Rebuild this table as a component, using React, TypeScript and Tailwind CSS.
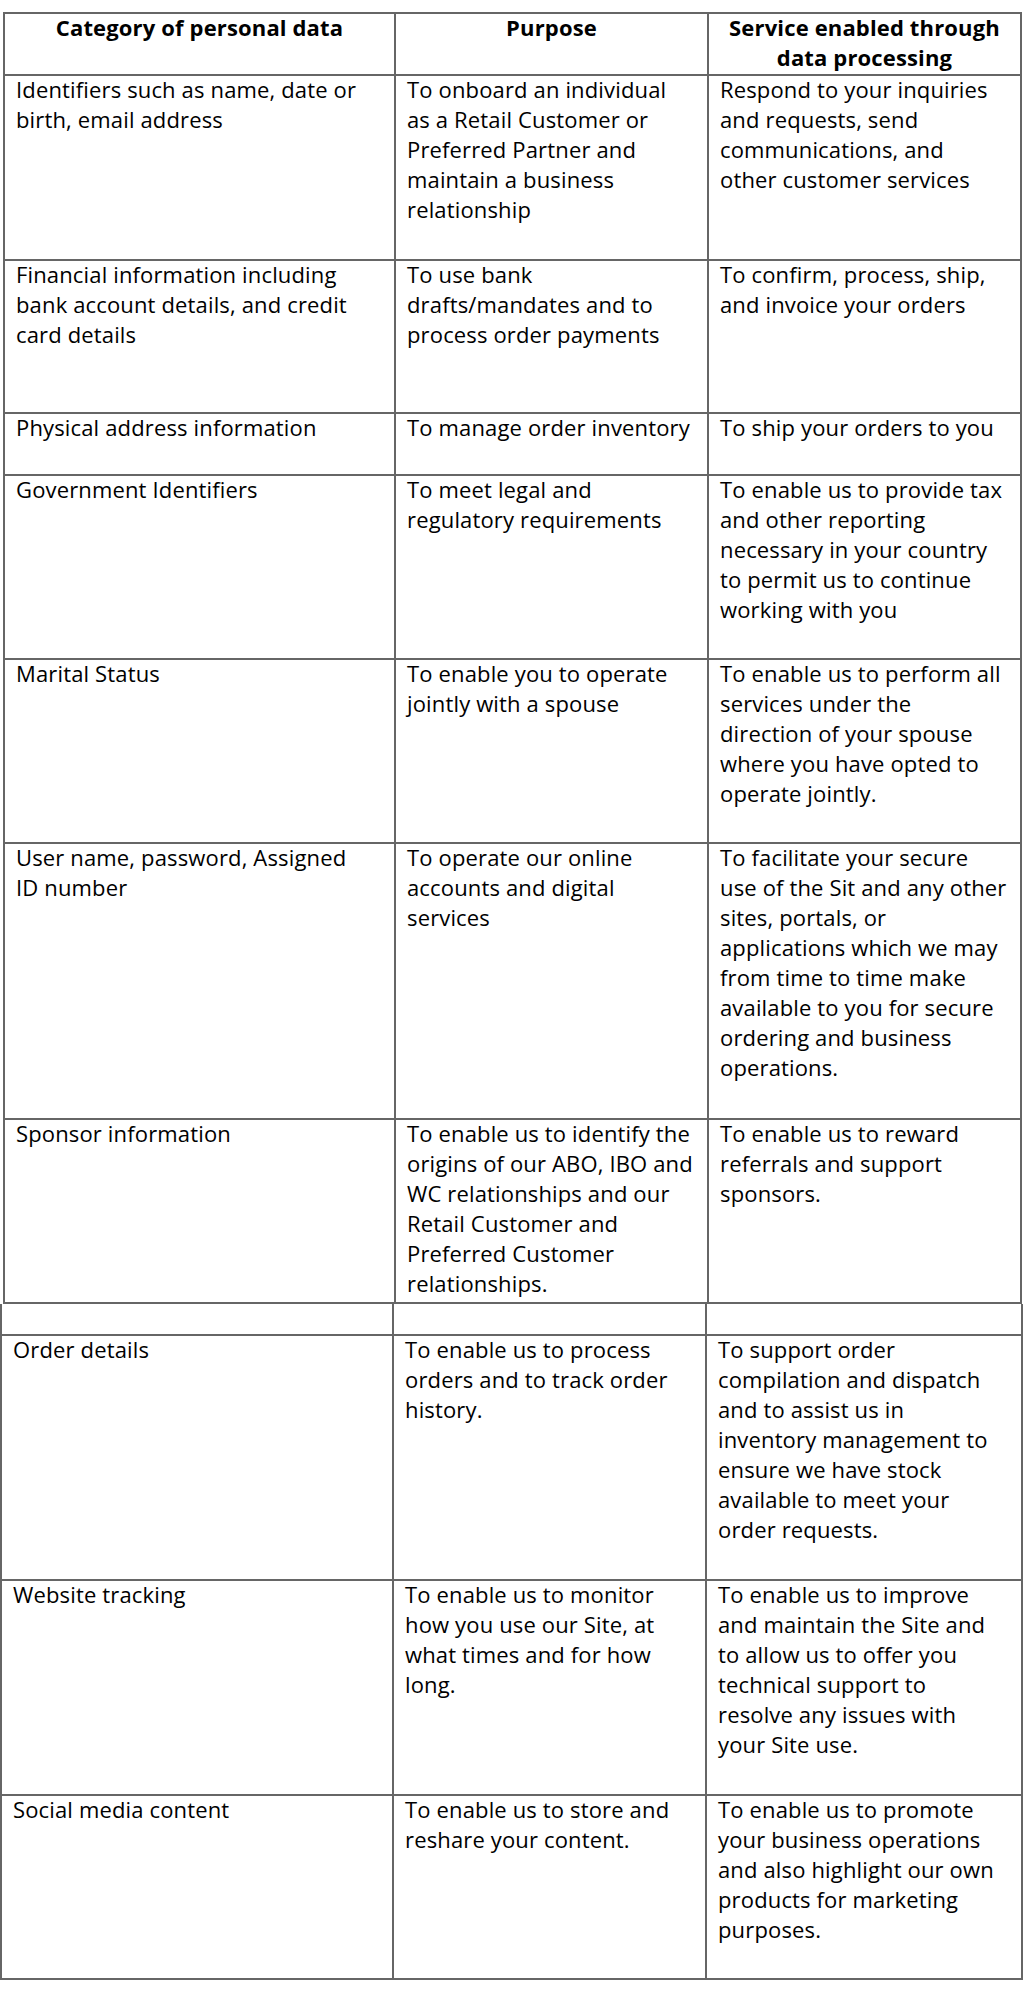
type Row = { h: string; cells: string[][] }

const firstRows: Row[] = [
  {
    h: 'h-[185px]',
    cells: [
      ['Identifiers such as name, date or', 'birth, email address'],
      ['To onboard an individual', 'as a Retail Customer or', 'Preferred Partner and', 'maintain a business', 'relationship'],
      ['Respond to your inquiries', 'and requests, send', 'communications, and', 'other customer services'],
    ],
  },
  {
    h: 'h-[153px]',
    cells: [
      ['Financial information including', 'bank account details, and credit', 'card details'],
      ['To use bank', 'drafts/mandates and to', 'process order payments'],
      ['To confirm, process, ship,', 'and invoice your orders'],
    ],
  },
  {
    h: 'h-[62px]',
    cells: [['Physical address information'], ['To manage order inventory'], ['To ship your orders to you']],
  },
  {
    h: 'h-[184px]',
    cells: [
      ['Government Identifiers'],
      ['To meet legal and', 'regulatory requirements'],
      ['To enable us to provide tax', 'and other reporting', 'necessary in your country', 'to permit us to continue', 'working with you'],
    ],
  },
  {
    h: 'h-[184px]',
    cells: [
      ['Marital Status'],
      ['To enable you to operate', 'jointly with a spouse'],
      ['To enable us to perform all', 'services under the', 'direction of your spouse', 'where you have opted to', 'operate jointly.'],
    ],
  },
  {
    h: 'h-[276px]',
    cells: [
      ['User name, password, Assigned', 'ID number'],
      ['To operate our online', 'accounts and digital', 'services'],
      [
        'To facilitate your secure',
        'use of the Sit and any other',
        'sites, portals, or',
        'applications which we may',
        'from time to time make',
        'available to you for secure',
        'ordering and business',
        'operations.',
      ],
    ],
  },
  {
    h: 'h-[184px]',
    cells: [
      ['Sponsor information'],
      ['To enable us to identify the', 'origins of our ABO, IBO and', 'WC relationships and our', 'Retail Customer and', 'Preferred Customer', 'relationships.'],
      ['To enable us to reward', 'referrals and support', 'sponsors.'],
    ],
  },
]

const secondRows: Row[] = [
  { h: 'h-[32px]', cells: [[], [], []] },
  {
    h: 'h-[245px]',
    cells: [
      ['Order details'],
      ['To enable us to process', 'orders and to track order', 'history.'],
      [
        'To support order',
        'compilation and dispatch',
        'and to assist us in',
        'inventory management to',
        'ensure we have stock',
        'available to meet your',
        'order requests.',
      ],
    ],
  },
  {
    h: 'h-[215px]',
    cells: [
      ['Website tracking'],
      ['To enable us to monitor', 'how you use our Site, at', 'what times and for how', 'long.'],
      ['To enable us to improve', 'and maintain the Site and', 'to allow us to offer you', 'technical support to', 'resolve any issues with', 'your Site use.'],
    ],
  },
  {
    h: 'h-[184px]',
    cells: [
      ['Social media content'],
      ['To enable us to store and', 'reshare your content.'],
      ['To enable us to promote', 'your business operations', 'and also highlight our own', 'products for marketing', 'purposes.'],
    ],
  },
]

function Lines({ lines }: { lines: string[] }) {
  return (
    <div className="-mt-[2px]">
      {lines.map((l, i) => (
        <div key={i} className="whitespace-nowrap">{l}</div>
      ))}
    </div>
  )
}

function DataTable({ rows, cols, header, top }: { rows: Row[]; cols: string[]; header?: boolean; top?: boolean }) {
  return (
    <table className={`table-fixed border-separate border-spacing-0 border-l-2 border-[#666] ${top ? 'border-t-2' : ''}`}>
      <colgroup>
        {cols.map((c, i) => (
          <col key={i} className={c} />
        ))}
      </colgroup>
      <tbody>
        {header && (
          <tr className="h-[62px]">
            <th className="border-r-2 border-b-2 border-[#666] px-[11px] align-top font-bold text-center">
              <Lines lines={['Category of personal data']} />
            </th>
            <th className="border-r-2 border-b-2 border-[#666] px-[11px] align-top font-bold text-center">
              <Lines lines={['Purpose']} />
            </th>
            <th className="border-r-2 border-b-2 border-[#666] px-[11px] align-top font-bold text-center">
              <Lines lines={['Service enabled through', 'data processing']} />
            </th>
          </tr>
        )}
        {rows.map((r, i) => (
          <tr key={i} className={r.h}>
            {r.cells.map((c, j) => (
              <td key={j} className="border-r-2 border-b-2 border-[#666] px-[11px] align-top font-normal">
                <Lines lines={c} />
              </td>
            ))}
          </tr>
        ))}
      </tbody>
    </table>
  )
}

export default function App() {
  return (
    <div className="w-[1023px] min-h-[2016px] bg-white pt-[12px] text-[22px] leading-[30px] tracking-[0.15px] text-black font-['Open_Sans',sans-serif]">
      <div className="pl-[3px]">
        <DataTable rows={firstRows} cols={['w-[391px]', 'w-[313px]', 'w-[313px]']} header top />
      </div>
      <div>
        <DataTable rows={secondRows} cols={['w-[392px]', 'w-[313px]', 'w-[316px]']} />
      </div>
    </div>
  )
}
